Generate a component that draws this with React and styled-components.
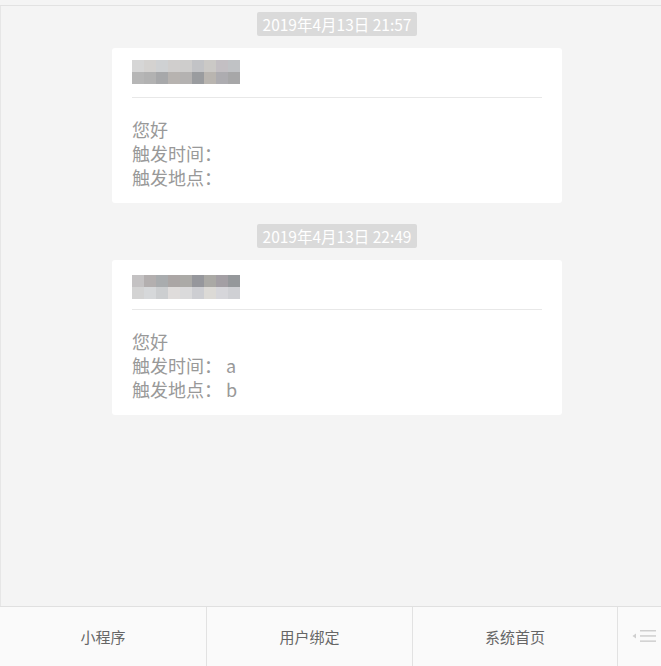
import React from "react";
import styled, { createGlobalStyle } from "styled-components";

const Global = createGlobalStyle`
  html, body { margin: 0; padding: 0; background: #f4f4f4; }
  body { font-family: "Noto Sans CJK SC", "Liberation Sans", sans-serif; }
  * { box-sizing: border-box; }
`;

const Page = styled.div`
  height: 666px;
  display: flex;
  flex-direction: column;
  background: #f4f4f4;
`;

const TopStrip = styled.div`
  height: 6px;
  flex: none;
  border-bottom: 1px solid #e2e2e2;
`;

const Feed = styled.div`
  flex: 1;
  border-left: 1px solid #e6e6e6;
  display: flex;
  flex-direction: column;
  align-items: center;
  padding-top: 6px;
`;

const Stamp = styled.div`
  height: 24px;
  padding: 0 6px;
  border-radius: 2px;
  background: #dadada;
  color: #fff;
  font-size: 15.5px;
  line-height: 24px;
  margin-top: ${(p) => p.$gap}px;
  margin-left: 12px;
`;

const Card = styled.div`
  width: 450px;
  margin-top: 12px;
  margin-left: 12px;
  background: #fff;
  border-radius: 3px;
  padding: 0 20px 14px;
`;

const CardHead = styled.div`
  height: 50px;
  border-bottom: 1px solid #e8e8e8;
  padding-top: ${(p) => p.$top}px;
`;

const Mosaic = styled.div`
  display: grid;
  grid-template-columns: repeat(9, 12px);
  grid-auto-rows: 12px;
`;

const Tile = styled.div`
  background: ${(p) => p.$c};
`;

const Body = styled.div`
  padding-top: 19px;
  color: #999;
  font-size: 18px;
  line-height: 24px;
`;

const Line = styled.div``;

const Bar = styled.div`
  height: 60px;
  flex: none;
  display: grid;
  grid-template-columns: 206px 206px 205px 1fr;
  background: #fafafa;
  border-top: 1px solid #e0e0e0;
`;

const Tab = styled.div`
  display: flex;
  align-items: center;
  justify-content: center;
  color: #666;
  font-size: 15px;
  border-left: ${(p) => (p.$first ? "none" : "1px solid #e2e2e2")};
`;

const Switch = styled(Tab)`
  padding-left: 10px;
`;

const rowsA = [
  ["#d6d6d6", "#d4d2d0", "#cfd1d3", "#d0cecd", "#cecdcc", "#c2c3c6", "#cbc9c6", "#c3bfc3", "#c0c2c5"],
  ["#b6b6b6", "#b2b2b2", "#a7a8aa", "#b7b3b0", "#b4b2b1", "#9a9c9f", "#b9b5b0", "#adacb0", "#a7a7a8"],
];
const rowsB = [
  ["#c4c2c3", "#b3afaf", "#a9acae", "#aba6a5", "#abaaa7", "#96979c", "#aaa9a5", "#a39fa4", "#95989b"],
  ["#d3d3d3", "#d6d8da", "#ccced0", "#dfdcdb", "#dadadb", "#cdced2", "#dcdad6", "#d6d6da", "#cfd0d4"],
];

const messages = [
  { time: "2019年4月13日 21:57", gap: 0, top: 12, rows: rowsA, t: "", p: "" },
  { time: "2019年4月13日 22:49", gap: 21, top: 15, rows: rowsB, t: " a", p: " b" },
];

const MenuIcon = () => (
  <svg width="26" height="16" viewBox="0 0 26 16">
    <path d="M4 4.5 L0.5 7 L4 9.5 Z" fill="#cfcfcf" />
    <rect x="8" y="1" width="16" height="1.5" fill="#cfcfcf" />
    <rect x="8" y="6.2" width="16" height="1.5" fill="#cfcfcf" />
    <rect x="8" y="11.4" width="16" height="1.5" fill="#cfcfcf" />
  </svg>
);

export default function App() {
  return (
    <Page>
      <Global />
      <TopStrip />
      <Feed>
        {messages.map((m, i) => (
          <React.Fragment key={i}>
            <Stamp $gap={m.gap}>{m.time}</Stamp>
            <Card>
              <CardHead $top={m.top}>
                <Mosaic>
                  {m.rows.flat().map((c, j) => (
                    <Tile key={j} $c={c} />
                  ))}
                </Mosaic>
              </CardHead>
              <Body>
                <Line>您好</Line>
                <Line>触发时间：{m.t}</Line>
                <Line>触发地点：{m.p}</Line>
              </Body>
            </Card>
          </React.Fragment>
        ))}
      </Feed>
      <Bar>
        <Tab $first>小程序</Tab>
        <Tab>用户绑定</Tab>
        <Tab>系统首页</Tab>
        <Switch>
          <MenuIcon />
        </Switch>
      </Bar>
    </Page>
  );
}
